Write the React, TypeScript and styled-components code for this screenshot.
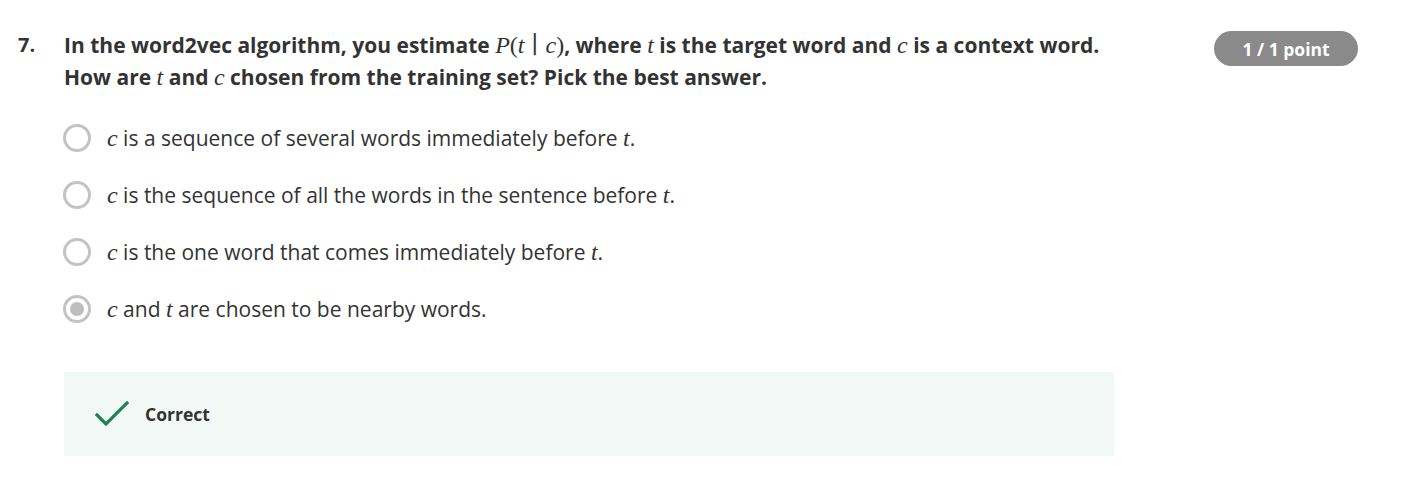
import React from "react";
import styled, { createGlobalStyle } from "styled-components";

const Global = createGlobalStyle`
  html, body { margin: 0; padding: 0; background: #ffffff; }
  body { font-family: "Open Sans", "Noto Sans", sans-serif; color: #333333; }
`;

const Page = styled.div`
  display: flex;
  align-items: flex-start;
  padding: 29px 64px 0 18px;
  width: 1422px;
  box-sizing: border-box;
`;

const Number = styled.div`
  width: 46px;
  font-size: 20px;
  font-weight: 700;
  line-height: 32px;
  color: #333333;
`;

const Body = styled.div`
  width: 1050px;
`;

const Question = styled.div`
  font-size: 21px;
  font-weight: 700;
  line-height: 32px;
  color: #333333;
  white-space: nowrap;
`;

const M = styled.span`
  font-family: "Liberation Serif", "DejaVu Serif", serif;
  font-style: italic;
  font-weight: 400;
  font-size: 24px;
`;

const Mu = styled.span<{ $pad?: boolean }>`
  font-family: "Liberation Serif", "DejaVu Serif", serif;
  font-weight: 400;
  font-size: 24px;
  padding: ${(p) => (p.$pad ? "0 7px" : "0")};
`;

const Options = styled.div`
  display: flex;
  flex-direction: column;
  margin-top: 16px;
`;

const Option = styled.label`
  display: flex;
  align-items: center;
  gap: 16px;
  height: 57px;
  margin-left: -1px;
  font-size: 21px;
  line-height: 28px;
  color: #333333;
`;

const Radio = styled.span<{ $checked?: boolean }>`
  width: 28px;
  height: 28px;
  border-radius: 50%;
  border: 3px solid #c3c3c3;
  box-sizing: border-box;
  display: flex;
  align-items: center;
  justify-content: center;
  flex-shrink: 0;
  &::after {
    content: "";
    display: ${(p) => (p.$checked ? "block" : "none")};
    width: 14px;
    height: 14px;
    border-radius: 50%;
    background: #bdbdbd;
  }
`;

const Feedback = styled.div`
  margin-top: 35px;
  height: 84px;
  background: #f2f8f5;
  display: flex;
  align-items: center;
  padding-left: 31px;
  gap: 16px;
`;

const FeedbackText = styled.span`
  font-size: 17.5px;
  font-weight: 700;
  color: #333333;
`;

const Badge = styled.div`
  margin-left: auto;
  margin-top: 2px;
  height: 35px;
  width: 144px;
  border-radius: 18px;
  background: #8a8a8a;
  color: #ffffff;
  font-size: 17.5px;
  font-weight: 700;
  display: flex;
  align-items: center;
  justify-content: center;
`;

const options = [
  { rest: " is a sequence of several words immediately before " },
  { rest: " is the sequence of all the words in the sentence before " },
  { rest: " is the one word that comes immediately before " },
];

export default function App() {
  return (
    <>
      <Global />
      <Page>
        <Number>7.</Number>
        <Body>
          <Question>
            In the word2vec algorithm, you estimate <M>P</M>
            <Mu>(</Mu>
            <M>t</M>
            <Mu $pad>∣</Mu>
            <M>c</M>
            <Mu>)</Mu>, where <M>t</M> is the target word and <M>c</M> is a context word.
            <br />
            How are <M>t</M> and <M>c</M> chosen from the training set? Pick the best answer.
          </Question>
          <Options>
            {options.map((o, i) => (
              <Option key={i}>
                <Radio />
                <span>
                  <M>c</M>
                  {o.rest}
                  <M>t</M>.
                </span>
              </Option>
            ))}
            <Option>
              <Radio $checked />
              <span>
                <M>c</M> and <M>t</M> are chosen to be nearby words.
              </span>
            </Option>
          </Options>
          <Feedback>
            <svg width="34" height="26" viewBox="0 0 34 26" fill="none">
              <path d="M2 14 L11 23 L32 2" stroke="#1f8354" strokeWidth="3.2" strokeLinecap="square" />
            </svg>
            <FeedbackText>Correct</FeedbackText>
          </Feedback>
        </Body>
        <Badge>1 / 1 point</Badge>
      </Page>
    </>
  );
}
